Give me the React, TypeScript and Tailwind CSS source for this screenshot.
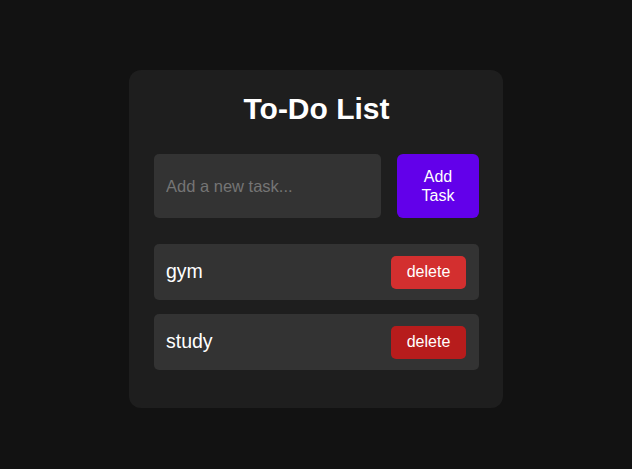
const tasks = [
  { text: "gym", color: "bg-[#d32f2f]" },
  { text: "study", color: "bg-[#b71c1c]" },
];

export default function App() {
  return (
    <div className="min-h-screen bg-[#121212] pt-[70px] font-['Liberation_Sans',Arial,sans-serif] text-white">
      <div className="mx-auto w-[374px] rounded-[12px] bg-[#1e1e1e] pl-[25px] pr-[24px] pt-[22px] pb-[38px]">
        <h1 className="mb-[29px] text-center text-[30px] font-bold leading-[33px]">To-Do List</h1>

        <div className="mb-[26px] flex gap-[16px]">
          <input
            type="text"
            placeholder="Add a new task..."
            className="h-[64px] min-w-0 flex-1 rounded-[5px] bg-[#333333] px-[12px] text-[16.5px] text-white outline-none placeholder:text-[#757575]"
          />
          <button className="h-[64px] w-[82px] rounded-[6px] bg-[#6200ea] px-[14px] text-[16px] leading-[19px] text-white">
            Add Task
          </button>
        </div>

        <ul className="flex flex-col gap-[14px]">
          {tasks.map((task) => (
            <li
              key={task.text}
              className="flex h-[56px] items-center justify-between rounded-[5px] bg-[#333333] pl-[12px] pr-[13px]"
            >
              <span className="text-[19.5px]">{task.text}</span>
              <button className={`h-[33px] w-[75px] rounded-[5px] ${task.color} text-[16px] text-white`}>
                delete
              </button>
            </li>
          ))}
        </ul>
      </div>
    </div>
  );
}
